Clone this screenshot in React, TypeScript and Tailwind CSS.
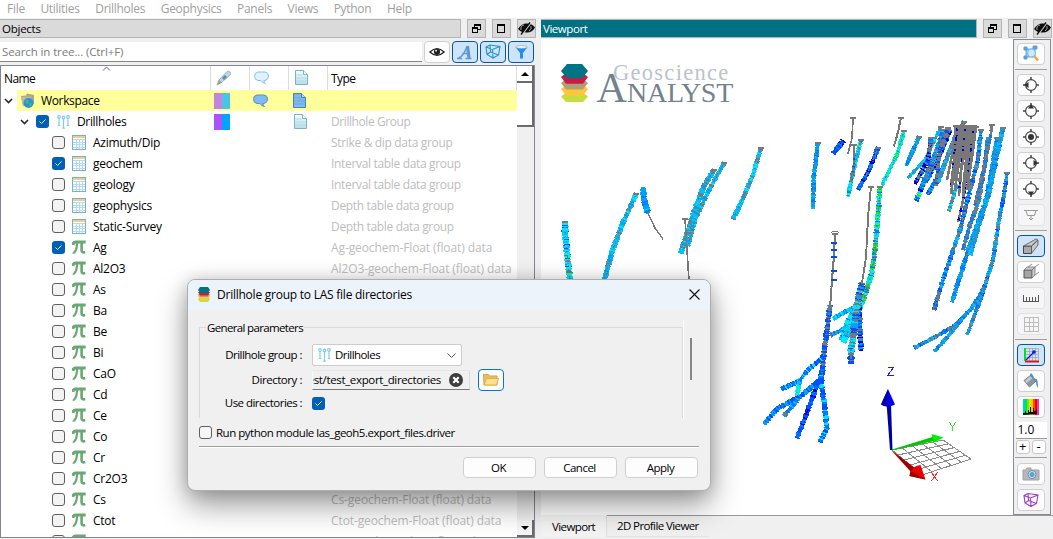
import type { ReactNode } from "react";

type Pt = [number, number];

const C = {
  cy: "#00e5ff", sky: "#00bfff", az: "#00a2f2", bl: "#0078ff", rb: "#0050ff", dk: "#0000d0",
  gy: "#787878", gn: "#10e810", tq: "#00f5c8", ye: "#ffd000", tl: "#008fc4",
};

const SKY = [C.sky, C.sky, C.sky, C.cy, C.sky, C.az, C.gy];
const AZ = [C.az, C.az, C.az, C.sky, C.bl, C.az];
const CYB = [C.cy, C.cy, C.sky, C.cy, C.rb, C.tq, C.gy];
const BLUE = [C.rb, C.rb, C.bl, C.rb, C.dk, C.bl];
const MIX = [C.bl, C.az, C.rb, C.gy, C.bl, C.sky];
const CYAN = [C.cy, C.sky, C.cy, C.bl, C.tq];
const GREEN = [C.gn, C.tq, C.cy, C.gn, C.gy, C.bl, C.tq];
const MINT = [C.cy, C.tq, C.cy, C.tq, C.gn];
const GREY = [C.gy];
const GRB = [C.gy, C.gy, C.gy, C.rb, C.gy];
const DARK = [C.dk, C.rb, C.az, C.dk, C.bl, C.gy];
const HOT = [C.bl, C.dk, C.gn, C.cy, C.rb, C.ye];

type Hole = { p: Pt[]; w: number; c: string[]; core?: boolean; cap?: boolean };

const holes: Hole[] = [
  { p: [[565, 222], [565, 232], [567, 252], [570, 281]], w: 6, c: CYB, core: true, cap: true },
  { p: [[636, 194], [622, 225], [612, 252], [604, 281]], w: 4.8, c: SKY, core: true, cap: true },
  { p: [[643, 188], [644, 200], [648, 213]], w: 5.5, c: AZ },
  { p: [[648, 213], [655, 228], [663, 239]], w: 1.4, c: GREY },
  { p: [[714, 170], [704, 186], [694, 212], [681, 253]], w: 5.2, c: SKY, core: true, cap: true },
  { p: [[724, 163], [708, 192], [695, 220], [688, 246]], w: 4.2, c: SKY, core: true, cap: true },
  { p: [[685, 219], [687, 250], [689, 281]], w: 1.6, c: GREY, cap: true },
  { p: [[761, 148], [753, 175], [740, 205], [733, 219]], w: 4.2, c: SKY, core: true, cap: true },
  { p: [[818, 143], [814, 175], [813, 208]], w: 4.2, c: AZ, core: true, cap: true },
  { p: [[843, 141], [833, 154]], w: 5, c: BLUE },
  { p: [[853, 118], [852, 138], [848, 153]], w: 1.6, c: GREY, cap: true },
  { p: [[861, 140], [854, 168], [848, 196]], w: 4, c: CYAN, core: true, cap: true },
  { p: [[854, 145], [854, 165], [851, 182]], w: 2.5, c: GRB, cap: true },
  { p: [[878, 148], [868, 172], [858, 190]], w: 4.4, c: BLUE, core: true, cap: true },
  { p: [[901, 118], [898, 132], [894, 146]], w: 2, c: GREY, cap: true },
  { p: [[904, 131], [897, 155], [882, 185]], w: 4, c: MINT, core: true, cap: true },
  { p: [[919, 137], [906, 166]], w: 4, c: AZ, core: true, cap: true },
  { p: [[941, 127], [925, 160], [908, 178]], w: 3.4, c: SKY, core: true, cap: true },
  { p: [[931, 138], [928, 160], [915, 184]], w: 4.2, c: DARK, core: true, cap: true },
  { p: [[950, 130], [938, 160], [924, 184]], w: 4.6, c: DARK, core: true },
  { p: [[924, 182], [916, 201]], w: 4.6, c: HOT },
  { p: [[944, 130], [933, 160], [922, 186]], w: 4.8, c: MIX, core: true, cap: true },
  { p: [[956, 135], [944, 165], [928, 194]], w: 4.2, c: MIX, core: true },
  { p: [[948, 128], [940, 150], [936, 185]], w: 4, c: GRB, cap: true },
  { p: [[964, 122], [950, 150], [938, 183]], w: 4, c: [C.az, C.gy, C.sky, C.gy], cap: true },
  { p: [[981, 130], [978, 160], [970, 190], [960, 230], [942, 283], [934, 310]], w: 4.2, c: MIX, core: true, cap: true },
  { p: [[988, 138], [984, 170], [979, 200], [970, 225], [963, 250]], w: 4, c: [C.bl, C.gy, C.az], core: true },
  { p: [[997, 138], [992, 170], [986, 200], [970, 245], [952, 302]], w: 4.4, c: AZ, core: true, cap: true },
  { p: [[1003, 128], [996, 160], [990, 190], [979, 225], [970, 255]], w: 4.4, c: AZ, core: true, cap: true },
  { p: [[992, 125], [990, 140], [982, 175], [975, 205]], w: 3, c: [C.gy, C.gy, C.gy, C.bl], cap: true },
  { p: [[1007, 173], [1004, 195], [999, 220], [993, 260], [982, 295], [967, 335]], w: 3.8, c: MIX, core: true, cap: true },
  { p: [[985, 286], [972, 308], [956, 325], [935, 337], [914, 348]], w: 4, c: MIX, core: true },
  { p: [[981, 298], [968, 312], [950, 334], [934, 352]], w: 3.8, c: AZ, core: true },
  { p: [[957, 185], [953, 198], [949, 211]], w: 3.6, c: [C.az, C.gy, C.cy] },
  { p: [[966, 185], [962, 205], [958, 222]], w: 2.4, c: [C.gy, C.dk, C.gy] },
  { p: [[871, 187], [868, 217], [866, 257], [862, 283]], w: 1.9, c: GREY, cap: true },
  { p: [[880, 187], [878, 215], [875, 250], [872, 272], [866, 292], [860, 308]], w: 4.8, c: GREEN, core: true, cap: true },
  { p: [[857, 306], [845, 312], [833, 319]], w: 4.4, c: CYAN },
  { p: [[855, 322], [844, 329], [831, 335]], w: 4.2, c: MIX, core: true },
  { p: [[853, 312], [846, 325], [841, 340]], w: 5, c: CYAN },
  { p: [[856, 318], [848, 332], [843, 343]], w: 6, c: CYAN, core: true },
  { p: [[859, 305], [860, 330], [861, 350]], w: 5, c: DARK },
  { p: [[862, 283], [857, 305], [854, 330], [851, 350], [851, 364]], w: 6.4, c: [C.gy, C.az, C.rb, C.gy, C.cy], core: true },
  { p: [[835, 234], [834, 255], [832, 280], [830, 308]], w: 2, c: GREY, cap: true },
  { p: [[830, 306], [827, 330], [824, 352], [821, 385]], w: 5.2, c: [C.rb, C.rb, C.gy, C.bl], core: true },
  { p: [[823, 357], [808, 370], [799, 381], [782, 389]], w: 4.4, c: [C.rb, C.rb, C.cy, C.bl] },
  { p: [[800, 380], [797, 396]], w: 4.2, c: CYAN },
  { p: [[820, 380], [800, 397], [778, 408], [764, 424]], w: 4.8, c: [C.rb, C.bl, C.rb, C.az] },
  { p: [[800, 397], [784, 416]], w: 4.2, c: MIX },
  { p: [[817, 385], [808, 410], [797, 438]], w: 4.8, c: BLUE },
  { p: [[820, 375], [824, 402], [827, 428], [820, 442]], w: 4.8, c: [C.rb, C.bl, C.cy, C.rb] },
];

for (let i = 0; i < 11; i++) {
  const x = 956 + i * 2;
  holes.push({ p: [[x, 126 + (i % 3)], [x - 3, 150], [x - 9 + (i % 2) * 2, 180 + ((i * 7) % 20)]], w: 2.6, c: i % 4 === 1 ? [C.gy, C.gy, C.gy, C.gy, C.dk] : GREY, cap: true });
}

function drawHoles() {
  let seed = 7;
  const rnd = () => {
    seed = (seed * 16807) % 2147483647;
    return seed / 2147483647;
  };
  const out: { d: string; color: string; width: number }[] = [];
  for (const h of holes) {
    const parts: Record<string, string> = {};
    const add = (c: string, d: string) => {
      parts[c] = (parts[c] || "") + d;
    };
    let core = "";
    for (let i = 0; i + 1 < h.p.length; i++) {
      const [x0, y0] = h.p[i];
      const [x1, y1] = h.p[i + 1];
      const len = Math.hypot(x1 - x0, y1 - y0);
      const nx = -(y1 - y0) / len;
      const ny = (x1 - x0) / len;
      for (let t = 0; t < len; t += 1.1) {
        const x = x0 + ((x1 - x0) * t) / len;
        const y = y0 + ((y1 - y0) * t) / len;
        const r = h.w < 3 ? h.w / 2 : (h.w / 2) * (0.75 + rnd() * 0.5);
        const c = h.c[Math.floor(rnd() * h.c.length)];
        add(c, `M${(x - nx * r).toFixed(1)} ${(y - ny * r).toFixed(1)}L${(x + nx * r).toFixed(1)} ${(y + ny * r).toFixed(1)}`);
        if (h.core && rnd() < 0.36) core += `M${x.toFixed(1)} ${y.toFixed(1)}l${(-ny).toFixed(1)} ${nx.toFixed(1)}`;
      }
    }
    Object.keys(parts).forEach((c) => out.push({ d: parts[c], color: c, width: 1.6 }));
    if (core) out.push({ d: core, color: C.gy, width: 1.3 });
    if (h.cap) out.push({ d: `M${h.p[0][0] - 3} ${h.p[0][1]}h6`, color: C.gy, width: 1.6 });
  }
  return out;
}

const strokes = drawHoles();

const lerp = (a: Pt, b: Pt, t: number): Pt => [a[0] + (b[0] - a[0]) * t, a[1] + (b[1] - a[1]) * t];

function Scene() {
  const o: Pt = [892, 450];
  const y: Pt = [943, 440];
  const x: Pt = [922, 475];
  const f: Pt = [971, 459];
  const grid: string[] = [];
  for (let i = 0; i <= 5; i++) {
    const t = i / 5;
    const a = lerp(o, y, t), b = lerp(x, f, t), c = lerp(o, x, t), d = lerp(y, f, t);
    grid.push(`M${a}L${b}M${c}L${d}`);
  }
  return (
    <svg width="472" height="476" viewBox="541 39 472 476" className="block">
      <g shapeRendering="crispEdges" fill="none">
        {strokes.map((s, i) => (
          <path key={i} d={s.d} stroke={s.color} strokeWidth={s.width} />
        ))}
        <ellipse cx="835" cy="232.500" rx="3.500" ry="1.200" fill="#fff" stroke="#787878" />
        {[243, 250, 257, 271, 280].map((v) => (
          <path key={v} d={`M831 ${v}h6`} stroke="#0050e0" strokeWidth="2" />
        ))}
        <path d={grid.join("")} stroke="#8c8c8c" strokeWidth="1" />
      </g>
      <path d="M890 450L886.6 404h4.400L892.500 450z" fill="#0000a0" />
      <path d="M888 389l7 15.500q-7 4-14 0z" fill="#0000f0" />
      <path d="M888 389l-7 15.500q3 2 6 2z" fill="#0000a0" />
      <path d="M892 449.500L934 436.500v4.500L892 450.500z" fill="#00c800" />
      <path d="M931.500 434L943.500 437.500L934 442.500z" fill="#00f000" />
      <path d="M891 450l20 22 4-4z" fill="#a00000" />
      <path d="M925.500 479.500L909.500 476Q911 466 920.500 465z" fill="#e60000" />
      <path d="M925.500 479.500L909.500 476l1-5z" fill="#a00000" />
      <g fill="none" strokeWidth="1" shapeRendering="crispEdges">
        <path d="M887.500 367.500h6l-6 8h6" stroke="#1a1aff" />
        <path d="M949.500 422.500l3 4.500v4M955.500 422.500l-3 4.500" stroke="#20f020" />
        <path d="M931.500 472.500l6 8.500M937.500 472.500l-6 8.500" stroke="#ff2020" />
      </g>
      <g>
        <path d="M567 92h15l6 4.500-5 5.500h-17l-5-5.500z" fill="#c6dc40" />
        <path d="M561 89l5-4h17l5 4-5 6.500h-17z" fill="#ffc63a" />
        <path d="M561 83l5-4h17l5 4-5 6.500h-17z" fill="#b09e78" />
        <path d="M561 77l5-4h17l5 4-5 6.700h-17z" fill="#cc1a45" />
        <path d="M561 71l6-7h15l6 7-6 7.200h-15z" fill="#007385" />
        <text x="613" y="80" fontSize="22.500" fill="#bcc3c9" textLength="115" style={{ fontFamily: "'Liberation Serif', serif" }}>Geoscience</text>
        <text x="596.500" y="102" fontSize="42" fill="#73828d" style={{ fontFamily: "'Liberation Serif', serif" }}>A</text>
        <text x="627" y="102" fontSize="28" fill="#73828d" textLength="106" style={{ fontFamily: "'Liberation Serif', serif" }}>NALYST</text>
      </g>
    </svg>
  );
}

function Check({ on, light }: { on?: boolean; light?: boolean }) {
  return (
    <span className={"flex size-[13px] shrink-0 items-center justify-center rounded-[3px] " + (on ? "bg-[#005fb8]" : light ? "border border-[#5f5f5f] bg-[#f6f6f6]" : "border border-[#5f5f5f] bg-[#f3f3f3]")}>
      {on && (
        <svg width="9" height="9" viewBox="0 0 9 9"><path d="M1.500 4.500l2 2 4-4" fill="none" stroke="#e8f2fb" strokeWidth="1" /></svg>
      )}
    </span>
  );
}

function Chevron() {
  return <svg width="9" height="6" viewBox="0 0 9 6" className="shrink-0"><path d="M1 1l3.500 3.500L8 1" fill="none" stroke="#2a2a2a" strokeWidth="1.600" /></svg>;
}

function HolesIcon() {
  return (
    <svg width="13" height="14" viewBox="0 0 13 14" className="shrink-0" fill="none" stroke="#7fcdf0" strokeWidth="1.200">
      <circle cx="2" cy="2" r="1.300" /><circle cx="6.500" cy="2.500" r="1.300" /><circle cx="11" cy="2" r="1.300" />
      <path d="M2 3.500v7M6.500 4v9M11 3.500v7M.8 10.500h2.400M5.200 13.200h2.600M9.800 10.500h2.400" />
    </svg>
  );
}

function TableIcon() {
  return (
    <svg width="14" height="15" viewBox="0 0 14 15" className="-mt-px shrink-0" shapeRendering="crispEdges">
      <rect x=".5" y=".5" width="13" height="14" fill="#fff" stroke="#78aed0" />
      <rect x="1" y="1" width="12" height="2" fill="#f0cd8c" />
      <path d="M1 4.500h12M1 7.500h12M1 9.500h12M1 12.500h12M4.500 4v10M7.500 4v10M10.500 4v10" stroke="#b4daf0" />
    </svg>
  );
}

function PiIcon() {
  return (
    <svg width="14" height="14" viewBox="0 0 14 14" className="-mt-[2px] shrink-0" fill="none" stroke="#6aa873">
      <path d="M.8 5Q1.300 2 3.500 2H13.700" strokeWidth="3" />
      <path d="M5 3q0 6.500-2.500 9.200-.8.800-1.600.3" strokeWidth="2.200" />
      <path d="M9.600 3v7.200q0 2.900 3.600 1.900" strokeWidth="2.600" />
    </svg>
  );
}

function Doc({ full }: { full?: boolean }) {
  return (
    <svg width="13" height="15" viewBox="0 0 13 15" className="-mt-px">
      <defs>
        <linearGradient id={full ? "docFull" : "docPale"} x1="0" y1="0" x2="0" y2="1">
          <stop offset="0" stopColor={full ? "#7db4e8" : "#f6fcfe"} /><stop offset="1" stopColor={full ? "#80bdf0" : "#b5dfea"} />
        </linearGradient>
      </defs>
      <path d="M.5.5h8l4 4v10H.5z" fill={full ? "url(#docFull)" : "url(#docPale)"} stroke={full ? "#4682b4" : "#80b0c4"} />
      <path d="M1.500 5h6M1.500 8h10M1.500 11h10" stroke={full ? "#6ba7dc" : "#b3d9e6"} />
      <path d="M8.500.5v4h4" fill={full ? "#b9dbf5" : "#fff"} stroke={full ? "#4682b4" : "#80b0c4"} />
    </svg>
  );
}

function Bubble({ full }: { full?: boolean }) {
  return (
    <svg width="15" height="14" viewBox="0 0 15 14" className="-ml-px">
      <path d="M4 1h7q3.500.3 3.500 4t-3.500 4.500H9.800q.4 2 1.700 3-3-.5-4.700-3H4Q.5 9 .5 5.200T4 1z" fill={full ? "#80baf2" : "#dff2fe"} stroke={full ? "#5591c0" : "#8dbfdc"} />
    </svg>
  );
}

function Pencil() {
  return (
    <svg width="15" height="16" viewBox="0 0 15 16">
      <path d="M1 15l2-5L10.500 2q2-1.500 3.500 0t0 3L6 12z" fill="#b9d9ec" stroke="#9fb4c2" />
      <path d="M1 15l2-5 3 2.500z" fill="#a39b92" /><path d="M6 8l3-3 2 2-3 3z" fill="#6f8796" />
    </svg>
  );
}

const EyeShape = () => (
  <>
    <path d="M1 6Q9-1.500 17 6 9 13.500 1 6z" fill="none" stroke="#222" strokeWidth="1.400" />
    <circle cx="9" cy="5.800" r="3.500" fill="#222" /><circle cx="8" cy="4.500" r="1" fill="#fff" />
  </>
);

function Caption({ kind }: { kind: "restore" | "max" | "hide" }) {
  return (
    <span className="flex size-[19px] shrink-0 items-center justify-center border border-[#b4b4b4] bg-[#dadada]">
      {kind === "restore" && <svg width="9" height="9" viewBox="0 0 9 9" fill="none" stroke="#000" shapeRendering="crispEdges"><path d="M2.500 4V.5h6v5H6M2 1.500h7" /><path d="M.5 3.500h5v5h-5zM0 4.500h6" /></svg>}
      {kind === "max" && <svg width="9" height="9" viewBox="0 0 9 9" fill="none" stroke="#000" shapeRendering="crispEdges"><path d="M.5.5h7v8h-7zM0 1.500h8" /></svg>}
      {kind === "hide" && (
        <svg width="17" height="13" viewBox="0 0 17 13" className="-mx-1 shrink-0">
          <path d="M0 7Q4 1 9 1.500q5 0 8 4Q14 11 8 10.500 3 10.500 0 7z" fill="#0b0b0b" />
          <path d="M3 8q-1-4 3-5M11 9q3-2 2-5" stroke="#ccc" fill="none" strokeWidth=".8" />
          <path d="M4 12.500L13 .5" stroke="#dadada" strokeWidth="1.500" /><path d="M3 12.500L12 .5" stroke="#0b0b0b" strokeWidth="1.300" />
        </svg>
      )}
    </span>
  );
}

const captions = <div className="flex gap-[6px]"><Caption kind="restore" /><Caption kind="max" /><Caption kind="hide" /></div>;

const CubeWire = ({ color }: { color: string }) => (
  <g fill="none" stroke={color} strokeWidth="1.100"><path d="M1 3l4-2 10 1.500L13.500 11 8 14 2 10.500zM1 3l6.500 2.500L15 2.500M7.500 5.500L8 14M5 1l.5 7L2 10.500M5.500 8l8 3" /></g>
);

function SearchBtn({ on, children }: { on?: boolean; children: ReactNode }) {
  return <span className={"-mt-px flex h-[22px] w-[26px] items-center justify-center rounded-[4px] border " + (on ? "border-[#0058a8] bg-[#cfe4f8]" : "border-[#d0d0d0] bg-[#fdfdfd]")}>{children}</span>;
}

const groups: [string, string, boolean][] = [
  ["Azimuth/Dip", "Strike & dip data group", false],
  ["geochem", "Interval table data group", true],
  ["geology", "Interval table data group", false],
  ["geophysics", "Depth table data group", false],
  ["Static-Survey", "Depth table data group", false],
];
const elements = ["Ag", "Al2O3", "As", "Ba", "Be", "Bi", "CaO", "Cd", "Ce", "Co", "Cr", "Cr2O3", "Cs", "Ctot", "Cu"];

function Row({ name, type, on, icon, loose }: { name: string; type: string; on: boolean; icon: ReactNode; loose?: boolean }) {
  return (
    <div className="flex h-[21px] shrink-0 items-center pl-[51px]">
      <Check on={on} />
      <span className="ml-[7px] w-[21px]">{icon}</span>
      <span className="w-[238px]">{name}</span>
      <span className={"whitespace-nowrap text-[#bdbdbd] " + (loose ? "tracking-[-0.100px]" : "tracking-[-0.330px]")}>{type}</span>
    </div>
  );
}

function ObjectsPanel() {
  return (
    <section className="flex w-[536px] shrink-0 flex-col">
      <div className="flex h-[21px] items-center gap-[6px]">
        <div className="flex h-[19px] w-[461px] items-center border border-l-0 border-[#b4b4b4] bg-[#dadada] pl-[2px] text-[11.500px]">Objects</div>
        {captions}
      </div>
      <div className="flex h-[26px] items-center gap-[2px]">
        <div className="flex h-5 w-[422px] items-center border-b border-[#868686] bg-white pl-[2px] text-[11.500px] text-[#7c7c7c] tracking-[-0.120px]">Search in tree... (Ctrl+F)</div>
        <SearchBtn><svg width="16" height="12" viewBox="0 0 18 12"><EyeShape /></svg></SearchBtn>
        <SearchBtn on><svg width="16" height="16" viewBox="0 0 16 16" fill="none" stroke="#5b9bd0"><path d="M1.500 14Q6 13 10 2.500M10.500 2l1.500 12" strokeWidth="1.500" /><path d="M10.500 2l1.500 12" strokeWidth="3.200" /><path d="M5.500 9.500h6M0 14.500h5M8.500 14.500h6" strokeWidth="1.500" /></svg></SearchBtn>
        <SearchBtn on><svg width="16" height="15" viewBox="0 0 16 15"><CubeWire color="#2796c4" /></svg></SearchBtn>
        <SearchBtn on><svg width="13" height="14" viewBox="0 0 13 14"><path d="M.5 2Q6.500 4 12.500 2L8 8v5.500H5V8z" fill="#1e90f0" /><ellipse cx="6.500" cy="2" rx="6" ry="1.500" fill="#f2f0e8" stroke="#8ba7b8" strokeWidth=".6" /></svg></SearchBtn>
      </div>
      <div className="flex h-[473px] w-[535px] overflow-hidden border border-[#82858f] bg-white">
        <div className="w-[516px]">
          <div className="relative flex h-6 items-center">
            <svg width="9" height="5" viewBox="0 0 9 5" className="absolute left-[101px] top-0"><path d="M1 4.500L4.500 1 8 4.500" fill="none" stroke="#666" /></svg>
            <div className="h-full w-[209px] pl-[3px] pt-[5px] tracking-[-0.600px]">Name</div>
            <div className="flex h-full w-[39px] items-center border-l border-[#dcdcdc] pl-[5px]"><Pencil /></div>
            <div className="flex h-full w-[39px] items-center border-l border-[#dcdcdc] pl-[5px]"><Bubble /></div>
            <div className="flex h-full w-[39px] items-center border-l border-[#dcdcdc] pl-[6px]"><Doc /></div>
            <div className="h-full flex-1 border-x border-[#dcdcdc] pl-[3px] pt-[5px] tracking-[-0.600px]">Type</div>
          </div>
          <div className="flex h-[21px] items-center pl-[3px]">
            <Chevron />
            <div className="ml-[4px] flex h-full flex-1 items-center bg-[#ffff9b] pl-[4px]">
              <svg width="14" height="16" viewBox="0 0 14 16"><path d="M0 3l5-.5 1-2 7 1.500v9L2 13z" fill="#a9a68f" /><path d="M0 4l10-.5 1 9L2 13z" fill="#bcb99f" /><circle cx="7.500" cy="10" r="5" fill="#2d8fe0" /><path d="M4.500 7.500q2-2 3 0t-.5 3-2-.5zM8 11q2-2 3 0l-2 3z" fill="#45bd58" /></svg>
              <span className="ml-[6px] w-[173px] tracking-[-0.350px]">Workspace</span>
              <span className="flex"><i className="h-4 w-2 bg-[#c285de]" /><i className="h-4 w-2 bg-[#4ac4e4]" /></span>
              <span className="ml-[24px] w-[39px]"><Bubble full /></span>
              <Doc full />
            </div>
          </div>
          <div className="flex h-[21px] items-center pl-[19px]">
            <Chevron />
            <span className="ml-[7px]"><Check on /></span>
            <span className="ml-[8px] w-5"><HolesIcon /></span>
            <span className="w-[137px] tracking-[-0.350px]">Drillholes</span>
            <span className="flex"><i className="h-4 w-2 bg-[#a955ff]" /><i className="h-4 w-2 bg-[#00a5ff]" /></span>
            <span className="ml-[64px] w-[37px]"><Doc /></span>
            <span className="text-[#bdbdbd] tracking-[-0.420px]">Drillhole Group</span>
          </div>
          {groups.map(([n, t, on]) => <Row key={n} name={n} type={t} on={on} icon={<TableIcon />} />)}
          {elements.map((n, i) => <Row key={n} name={n} type={n + "-geochem-Float (float) data"} on={i === 0} icon={<PiIcon />} loose />)}
        </div>
        <div className="flex w-[17px] flex-col justify-between bg-[#f0f0f0]">
          <div>
            <div className="flex h-[17px] items-center justify-center border-b-2 border-r-2 border-[#6b6b6b] bg-white"><svg width="8" height="4"><path d="M0 4l4-4 4 4z" /></svg></div>
            <div className="h-11 border-b-2 border-r-2 border-[#6b6b6b] bg-white" />
          </div>
          <div className="flex h-[17px] items-center justify-center border-b-2 border-r-2 border-[#6b6b6b] bg-[#f5f5f5]"><svg width="8" height="4"><path d="M0 0l4 4 4-4z" /></svg></div>
        </div>
      </div>
    </section>
  );
}

function Tool({ on, off, children }: { on?: boolean; off?: boolean; children: ReactNode }) {
  return (
    <span className={"flex h-[22px] w-7 shrink-0 items-center justify-center rounded-[4px] border " + (on ? "border-[#0058a8] bg-[#cfe4f8]" : off ? "border-[#e2e2e2] bg-[#f6f6f6]" : "border-[#cfcfcf] bg-[#fdfdfd]")}>
      <svg width="18" height="18" viewBox="0 0 18 18" className="shrink-0">{children}</svg>
    </span>
  );
}

function Target({ arrow }: { arrow?: string }) {
  return (
    <g fill="none" stroke="#444">
      <circle cx="9" cy="9" r="5.400" strokeWidth="1.200" />
      <path d="M9 1v3M9 14v3M1 9h3M14 9h3" strokeWidth="1.500" />
      {arrow ? <path d={arrow} fill="#333" stroke="none" /> : <circle cx="9" cy="9" r="3" fill="#333" stroke="none" />}
    </g>
  );
}

const Sep = () => <div className="h-px w-8 shrink-0 bg-[#a0a0a0]" />;

function Toolbar() {
  return (
    <aside className="flex h-[476px] w-[38px] shrink-0 flex-col items-center gap-1 border border-[#868a95] pr-[2px] pt-[3px]">
      <Tool><path d="M4 4h9v8H4z" fill="#8fd0f5" stroke="#68a5d5" /><path d="M2 2h3v3H2zM11 1h4v3h-4zM2 11h3v3H2z" fill="#5f9fd8" stroke="#5f9fd8" /><circle cx="9.500" cy="8" r="4" fill="#c9eafd" stroke="#7bbce2" /><path d="M12 11l4 4.500" stroke="#eda83b" strokeWidth="2.500" /></Tool>
      <Sep />
      <Tool><Target arrow="M2 9l4.500-3v6z" /></Tool>
      <Tool><Target arrow="M9 2L6 6.500h6z" /></Tool>
      <Tool><Target /></Tool>
      <Tool><Target arrow="M16 9l-4.500-3v6z" /></Tool>
      <Tool><Target arrow="M9 16l-3-4.500h6z" /></Tool>
      <Tool off><path d="M2 4.500h14M4 4.500l1.500 5h7L14 4.500M9 10v4M7 12l2 2 2-2" fill="none" stroke="#999" /></Tool>
      <Sep />
      <Tool on><path d="M1.500 9h8v7.500h-8z" fill="#aaa" stroke="#444" /><path d="M1.500 9L14 2l2 1-6.500 6zM9.500 9L16 3v5l-6.500 8.500z" fill="#c4c9cd" stroke="#555" strokeWidth=".8" /></Tool>
      <Tool><path d="M2 7h8v8H2z" fill="#a5a5a5" stroke="#555" /><path d="M2 7l3-3h8l-3 3zM10 7l3-3v8l-3 3z" fill="#ccc" stroke="#777" strokeWidth=".8" /><path d="M6 4l4-3M13 4l4-3M13 12l4-3" stroke="#777" strokeWidth=".8" /></Tool>
      <Tool off><path d="M1.500 6v6.500h15V6M4.500 8v4M7.500 8v4M10.500 8v4M13.500 8v4" fill="none" stroke="#555" shapeRendering="crispEdges" /></Tool>
      <Tool off><path d="M2.500 2.500h14v14h-14zM7.500 2v14M11.500 2v14M2 7.500h14M2 11.500h14" fill="none" stroke="#bcbcbc" shapeRendering="crispEdges" /></Tool>
      <Sep />
      <Tool on><path d="M4 2.500h12.500V15M4 5.500h12M4 8.500h12M4 11.500h12M7.500 2v13M10.500 2v13M13.500 2v13" stroke="#9aa" strokeWidth=".8" fill="none" /><path d="M3 2v13" stroke="#00e020" strokeWidth="2" /><path d="M3 15.500h14" stroke="#ee1010" strokeWidth="2" /><path d="M4 14l8-8" stroke="#1010ff" strokeWidth="1.300" /><circle cx="12" cy="6" r="1.800" fill="#1010ff" /></Tool>
      <Tool><path d="M2 8.500L9 3l5 6-6.500 6z" fill="#8b98a4" stroke="#74818b" /><path d="M3 8.500l6-5 2 2-6.500 6z" fill="#c1c9cf" /><path d="M8 4q0-4 2-2l3 5q3-2 3 9-2-2-2-7" fill="#4a92bd" /></Tool>
      <Tool>{["#00cfd8", "#00e060", "#60ef00", "#d5ef00", "#ffc000", "#ff5000", "#e80020", "#ff30a0"].map((c, i) => <rect key={c} x={1 + i * 2} y="1" width="2" height="16" fill={c} />)}<path d="M1 17v-2h2v-2h1v2h2v-3h1v2h1v-5h1v5h2v-4h1v3h2v-2h1v5z" fill="#111" /></Tool>
      <div className="flex h-[17px] w-[31px] shrink-0 items-center border-b border-[#999] bg-white pl-[2px] tracking-normal">1.0</div>
      <div className="-mt-[3px] flex h-[14px] w-[31px] shrink-0 gap-[2px] text-[13px] leading-[11px]">
        <span className="w-[14px] rounded-[3px] border border-[#c8c8c8] bg-white text-center">+</span>
        <span className="w-[14px] rounded-[3px] border border-[#c8c8c8] bg-white text-center">-</span>
      </div>
      <div className="-mt-px h-px w-8 shrink-0 bg-[#a0a0a0]" />
      <div className="mt-px flex flex-col gap-1">
        <Tool><path d="M1 5h3l1-2h4v2h8v10H1z" fill="#b4b8bc" stroke="#9da2a6" /><circle cx="10" cy="9.500" r="4" fill="#d0e7f8" stroke="#888" /><circle cx="10" cy="9.500" r="2.500" fill="#4ba3e8" /></Tool>
        <Tool><g transform="translate(1 1.500)"><CubeWire color="#a03cc0" /></g></Tool>
      </div>
    </aside>
  );
}

function Dialog() {
  return (
    <div className="absolute left-[187px] top-[279px] flex h-[212px] w-[524px] flex-col overflow-hidden rounded-[8px] border border-[#aeaeae] bg-[#f0f0f0] shadow-[0_14px_30px_rgba(0,0,0,0.400),0_0_16px_rgba(0,0,0,0.150)]">
      <header className="flex h-[30px] shrink-0 items-center bg-[#edf3fa] pl-[10px] pr-[10px]">
        <svg width="12" height="15" viewBox="0 0 12 15" className="-mt-px"><path d="M2 10h8l2 2-2 3H2l-2-3z" fill="#c6dc40" /><path d="M0 9l1-1h10l1 1-2 4H2z" fill="#ffc63a" /><path d="M0 7l12 0-2 3H2z" fill="#b09e78" /><path d="M0 5h12l-2 3.500H2z" fill="#cc1a45" /><path d="M2 0h8l2 3-2 3H2L0 3z" fill="#007385" /></svg>
        <span className="ml-[7px] flex-1 tracking-[-0.240px]">Drillhole group to LAS file directories</span>
        <svg width="11" height="11" viewBox="0 0 11 11" className="-mt-[2px]"><path d="M.5.5l10 10M10.500.5l-10 10" stroke="#111" strokeWidth="1.100" /></svg>
      </header>
      <div className="flex h-[109px] shrink-0 pl-[11px] pt-[10px] text-[11.500px] tracking-[-0.550px]">
        <div className="relative w-[485px] border-r border-white">
          <div className="mt-[7px] h-[91px] w-[484px] border border-b-0 border-[#dadada]">
            <span className="absolute left-[7px] top-0 bg-[#f0f0f0] px-px leading-[15px] tracking-[-0.650px]">General parameters</span>
            <div className="grid grid-cols-[102px_1fr] gap-x-[10px] pt-[16px]">
              <div className="flex h-[22px] items-center justify-end">Drillhole group :</div>
              <div className="flex h-[22px] w-[150px] items-center rounded-[2px] border border-[#ccc] bg-white px-[5px]"><HolesIcon /><span className="ml-[4px] flex-1">Drillholes</span><svg width="9" height="5" viewBox="0 0 9 5"><path d="M.5.5l4 4 4-4" fill="none" stroke="#555" /></svg></div>
              <div className="flex h-[27px] items-center justify-end tracking-[-0.450px]">Directory :</div>
              <div className="flex h-[27px] items-center gap-2">
                <div className="flex h-5 w-[158px] items-center justify-end border border-t-[#e8e8e8] border-l-[#f8f8f8] border-r-[#dcdcdc] border-b-[#777] bg-[#f0f0f0] pr-[6px] tracking-[-0.350px]">
                  <span className="flex w-[128px] justify-end overflow-hidden whitespace-nowrap">test/test_export_directories</span>
                  <svg width="14" height="14" viewBox="0 0 14 14" className="ml-[8px] shrink-0"><circle cx="7" cy="7" r="7" fill="#3d3d3d" /><path d="M4.300 4.300l5.400 5.400M9.700 4.300L4.300 9.700" stroke="#fff" strokeWidth="2.200" /></svg>
                </div>
                <span className="flex h-[22px] w-[26px] items-center justify-center rounded-[4px] border border-[#0078d4] bg-[#fdfdfd]"><svg width="16" height="13" viewBox="0 0 16 13"><path d="M.5 1.500h5l1 1.500H14v9H1z" fill="#e9bf5c" stroke="#d3a74a" /><path d="M3.500 5.500h12l-2 6.500H1z" fill="#fde08c" stroke="#dcb052" /></svg></span>
              </div>
              <div className="flex h-[20px] items-center justify-end">Use directories :</div>
              <div className="flex h-[20px] items-center"><Check on /></div>
            </div>
          </div>
        </div>
        <div className="ml-[6px] mt-[18px] h-[42px] w-[2px] bg-[#868686]" />
      </div>
      <div className="ml-[11px] mt-[6px] flex h-[15px] shrink-0 items-center gap-1 text-[11.500px] tracking-[-0.490px]"><Check light />Run python module las_geoh5.export_files.driver</div>
      <div className="ml-[11px] mt-[6px] h-[2px] w-[500px] shrink-0 border-b border-white bg-[#a0a0a0]" />
      <div className="mt-[9px] flex justify-end gap-2 pr-[12px] text-[11.500px] tracking-[-0.500px]">
        {["OK", "Cancel", "Apply"].map((b) => <button key={b} className="h-[21px] w-[73px] rounded-[4px] border border-[#d0d0d0] bg-[#fdfdfd] pr-[2px] leading-[19px]">{b}</button>)}
      </div>
    </div>
  );
}

export default function App() {
  return (
    <div className="relative flex h-[539px] w-[1053px] flex-col overflow-hidden bg-[#f0f0f0] text-[12px] leading-4 tracking-[-0.250px] text-black" style={{ fontFamily: "'Open Sans', 'Noto Sans', sans-serif" }}>
      <nav className="flex h-[18px] shrink-0 items-center gap-[15.500px] bg-white pl-[7px] text-[#a0a0a0] tracking-[-0.280px]">
        {["File", "Utilities", "Drillholes", "Geophysics", "Panels", "Views", "Python", "Help"].map((m) => <span key={m}>{m}</span>)}
      </nav>
      <div className="flex h-[521px] gap-[5px]">
        <ObjectsPanel />
        <section className="flex w-[512px] flex-col">
          <div className="flex h-[21px] items-center gap-[6px]">
            <div className="flex h-[19px] w-[436px] items-center border border-l-0 border-[#b4b4b4] bg-[#007182] pl-[2px] text-[11.500px] tracking-[-0.450px] text-white">Viewport</div>
            {captions}
          </div>
          <div className="flex h-[476px]">
            <div className="w-[472px] bg-white"><Scene /></div>
            <Toolbar />
          </div>
          <div className="flex h-[24px] items-start text-[11.500px] tracking-[-0.600px]">
            <div className="h-[22px] w-[66px] border-r border-[#e0e0e0] bg-[#f3f3f3] pl-[11px] pt-[4px]">Viewport</div>
            <div className="flex-1 border-t border-[#999]"><div className="w-[102px] border-b border-[#e4e4e4] py-[2px] pl-[10px]">2D Profile Viewer</div></div>
          </div>
        </section>
      </div>
      <Dialog />
    </div>
  );
}
